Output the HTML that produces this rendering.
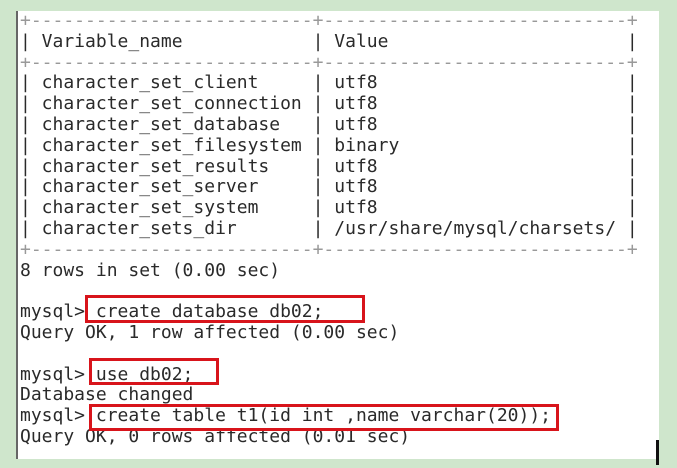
<!DOCTYPE html>
<html><head><style>
body{margin:0;width:677px;height:468px;background:#cfe6cc;position:relative;overflow:hidden}
#p{position:absolute;left:16px;top:11px;width:643px;height:448px;background:#fff;border-left:2px solid #666;box-sizing:border-box}
pre{position:absolute;left:20px;top:11px;margin:0;font-family:"DejaVu Sans Mono","Liberation Mono",monospace;font-size:18px;letter-spacing:0px;line-height:20.8px;color:#2a2a2a}
.d{color:#999}
.b{position:absolute;border:3px solid #d8141b;box-sizing:border-box}
</style></head><body>
<div id="p"></div>
<pre><span class="d">+--------------------------+----------------------------+</span>
| Variable_name            | Value                      |
<span class="d">+--------------------------+----------------------------+</span>
| character_set_client     | utf8                       |
| character_set_connection | utf8                       |
| character_set_database   | utf8                       |
| character_set_filesystem | binary                     |
| character_set_results    | utf8                       |
| character_set_server     | utf8                       |
| character_set_system     | utf8                       |
| character_sets_dir       | /usr/share/mysql/charsets/ |
<span class="d">+--------------------------+----------------------------+</span>
8 rows in set (0.00 sec)

mysql> create database db02;
Query OK, 1 row affected (0.00 sec)

mysql> use db02;
Database changed
mysql> create table t1(id int ,name varchar(20));
Query OK, 0 rows affected (0.01 sec)</pre>
<div class="b" style="left:85px;top:295px;width:280px;height:28px"></div>
<div class="b" style="left:89px;top:358px;width:130px;height:27px"></div>
<div class="b" style="left:89px;top:404px;width:470px;height:27px"></div>
<div style="position:absolute;left:656px;top:440px;width:3px;height:25px;background:#111"></div>
</body></html>
